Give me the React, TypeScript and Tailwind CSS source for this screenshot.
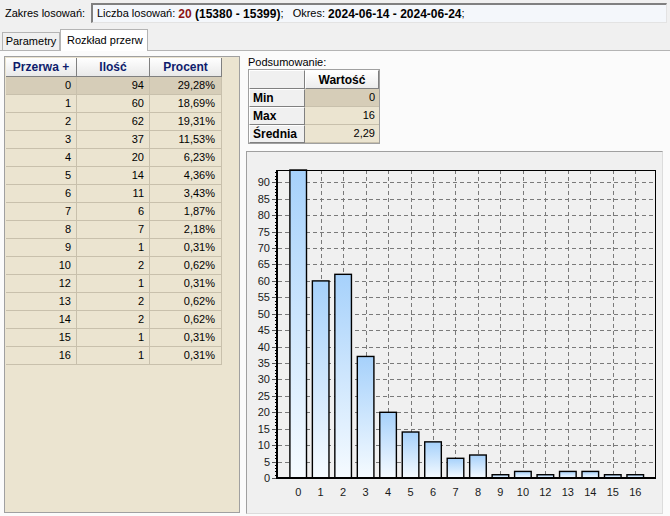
import React from "react";

type Row = [number, number, string];

const rows: Row[] = [
  [0, 94, "29,28%"],
  [1, 60, "18,69%"],
  [2, 62, "19,31%"],
  [3, 37, "11,53%"],
  [4, 20, "6,23%"],
  [5, 14, "4,36%"],
  [6, 11, "3,43%"],
  [7, 6, "1,87%"],
  [8, 7, "2,18%"],
  [9, 1, "0,31%"],
  [10, 2, "0,62%"],
  [12, 1, "0,31%"],
  [13, 2, "0,62%"],
  [14, 2, "0,62%"],
  [15, 1, "0,31%"],
  [16, 1, "0,31%"],
];

const summary = [
  { label: "Min", value: "0", selected: true },
  { label: "Max", value: "16", selected: false },
  { label: "Średnia", value: "2,29", selected: false },
];

// chart geometry (px inside the chart panel)
const L = 31;
const R = 408;
const T = 18;
const B = 326;
const PX_PER_UNIT = 3.285;
const yv = (v: number) => B - v * PX_PER_UNIT;
const cx = (i: number) => 51.2 + 22.47 * i;

function Chart() {
  const maxV = (B - T) / PX_PER_UNIT;
  const majors = Array.from({ length: 19 }, (_, k) => k * 5);
  const minors = Array.from({ length: 94 }, (_, k) => k);

  return (
    <svg width={416} height={362} className="block">
      <defs>
        <linearGradient id="barFill" x1="0" y1="0" x2="0" y2="1">
          <stop offset="0" stopColor="#a6d1fb" />
          <stop offset="1" stopColor="#f6fbff" />
        </linearGradient>
      </defs>

      {/* grid */}
      {majors.slice(1).map((v) => (
        <line
          key={`h${v}`}
          x1={L}
          x2={R}
          y1={Math.round(yv(v)) + 0.5}
          y2={Math.round(yv(v)) + 0.5}
          stroke="#7a7a7a"
          strokeDasharray="4 3"
        />
      ))}
      {rows.map((_, i) => (
        <line
          key={`v${i}`}
          x1={Math.round(cx(i)) + 0.5}
          x2={Math.round(cx(i)) + 0.5}
          y1={T}
          y2={B}
          stroke="#7a7a7a"
          strokeDasharray="4 3"
        />
      ))}

      {/* bars */}
      {rows.map(([, count], i) => {
        const top = yv(Math.min(count, maxV));
        return (
          <rect
            key={`b${i}`}
            x={cx(i) - 8.3}
            y={top}
            width={16.6}
            height={B - top}
            fill="url(#barFill)"
            stroke="#000"
            strokeWidth={1.4}
          />
        );
      })}

      {/* frame + axes */}
      <line x1={L} x2={R} y1={T + 0.5} y2={T + 0.5} stroke="#000" />
      <line x1={R + 0.5} x2={R + 0.5} y1={T} y2={B} stroke="#000" />
      {minors.map((v) => (
        <line key={`m${v}`} x1={L - 3} x2={L} y1={Math.round(yv(v)) + 0.5} y2={Math.round(yv(v)) + 0.5} stroke="#000" />
      ))}
      {majors.map((v) => (
        <line key={`t${v}`} x1={L - 6} x2={L} y1={Math.round(yv(v)) + 0.5} y2={Math.round(yv(v)) + 0.5} stroke="#555" />
      ))}
      <rect x={L - 2} y={T} width={2} height={B - T + 1} fill="#000" />
      <rect x={L - 2} y={B - 1} width={R - L + 3} height={2} fill="#000" />

      {/* labels */}
      {majors.map((v) => (
        <text
          key={`y${v}`}
          x={L - 8}
          y={yv(v) + 4}
          textAnchor="end"
          fontSize={11}
          fontFamily="Liberation Sans, Arial, sans-serif"
          fill="#1a1a1a"
        >
          {v}
        </text>
      ))}
      {rows.map(([gap], i) => (
        <text
          key={`x${i}`}
          x={cx(i)}
          y={344}
          textAnchor="middle"
          fontSize={11}
          fontFamily="Liberation Sans, Arial, sans-serif"
          fill="#1a1a1a"
        >
          {gap}
        </text>
      ))}
    </svg>
  );
}

const headCell =
  "flex items-center justify-center border-r border-b border-[#808080] bg-linear-to-b from-white to-[#e9e9e9] text-[12px] font-bold text-[#0e1c6c]";
const bodyCell = "flex items-center justify-end pr-[5px] border-r border-b border-[#c8c0ac]";
const btnCell =
  "flex items-center bg-[#f0f0f0] border-t border-l border-t-white border-l-white border-r border-b border-[#808080] text-[12px] font-bold";

export default function App() {
  return (
    <div className="w-[670px] h-[516px] overflow-hidden bg-[#f0f0f0] text-[11px] text-black font-['Liberation_Sans',Arial,sans-serif] flex flex-col">
      {/* Zakres */}
      <div className="h-[26px] flex items-start pt-[3px]">
        <div className="w-[91px] h-[20px] pl-[5px] flex items-center">Zakres losowań:</div>
        <div className="w-[576px] h-[20px] flex items-center pl-[4px] bg-[#f4f7fb] border-t-2 border-l-2 border-t-[#808080] border-l-[#808080] border-r border-b border-r-[#e3e3e3] border-b-[#e3e3e3] whitespace-pre overflow-hidden">
          <span>Liczba losowań: </span>
          <span className="font-bold text-[12px] text-[#8c1414]">20</span>
          <span className="font-bold text-[12px]"> (15380 - 15399)</span>
          <span>;   Okres: </span>
          <span className="font-bold text-[12px]">2024-06-14 - 2024-06-24</span>
          <span>;</span>
        </div>
      </div>

      {/* Tabs */}
      <div className="h-[24px] flex items-end pl-[2px]">
        <div className="w-[58px] h-[18px] flex items-center justify-center border border-b-0 border-[#b4b4b4] bg-[#f0f0f0]">
          Parametry
        </div>
        <div className="relative z-10 -mb-px w-[88px] h-[22px] flex items-center pl-[6px] border border-b-0 border-[#b4b4b4] bg-white">
          Rozkład przerw
        </div>
      </div>

      {/* Tab page */}
      <div className="flex-1 flex items-start border-t border-[#b4b4b4] bg-[#fbfbfb]">
        {/* left grid */}
        <div className="mt-[5px] ml-[4px] w-[236px] h-[457px] border border-[#a0a0a0] bg-[#ebe4d0] pt-[1px] pl-[1px]">
          <div className="flex h-[19px]">
            <div className={`${headCell} w-[71px]`}>Przerwa +</div>
            <div className={`${headCell} w-[73px]`}>Ilość</div>
            <div className={`${headCell} w-[72px]`}>Procent</div>
          </div>
          {rows.map(([gap, count, pct], i) => (
            <div key={gap} className={`flex h-[18px] w-[216px] ${i === 0 ? "bg-[#d6cdb8]" : ""}`}>
              <div className={`${bodyCell} w-[71px]`}>{gap}</div>
              <div className={`${bodyCell} w-[73px]`}>{count}</div>
              <div className={`${bodyCell} w-[72px] pr-[6px]`}>{pct}</div>
            </div>
          ))}
        </div>

        {/* right column */}
        <div className="mt-[5px] ml-[6px] flex flex-col">
          <div className="h-[13px] pl-[2px] leading-[13px]">Podsumowanie:</div>
          <div className="ml-[2px] w-[132px] border border-[#a0a0a0] bg-[#ebe4d0]">
            <div className="flex h-[19px]">
              <div className={`${btnCell} w-[56px]`} />
              <div className={`${btnCell} w-[74px] justify-center bg-linear-to-b from-white to-[#ececec]`}>Wartość</div>
            </div>
            {summary.map((s) => (
              <div key={s.label} className="flex h-[18px]">
                <div className={`${btnCell} w-[56px] pl-[3px]`}>{s.label}</div>
                <div
                  className={`w-[74px] flex items-center justify-end pr-[4px] border-b border-[#c8c0ac] ${
                    s.selected ? "bg-[#d6cdb8]" : ""
                  }`}
                >
                  {s.value}
                </div>
              </div>
            ))}
          </div>

          {/* chart panel */}
          <div className="mt-[7px] w-[417px] h-[363px] border border-[#a0a0a0] border-r-[#dcdcdc] border-b-[#dcdcdc] bg-[#f0f0f0]">
            <Chart />
          </div>
        </div>
      </div>
    </div>
  );
}
